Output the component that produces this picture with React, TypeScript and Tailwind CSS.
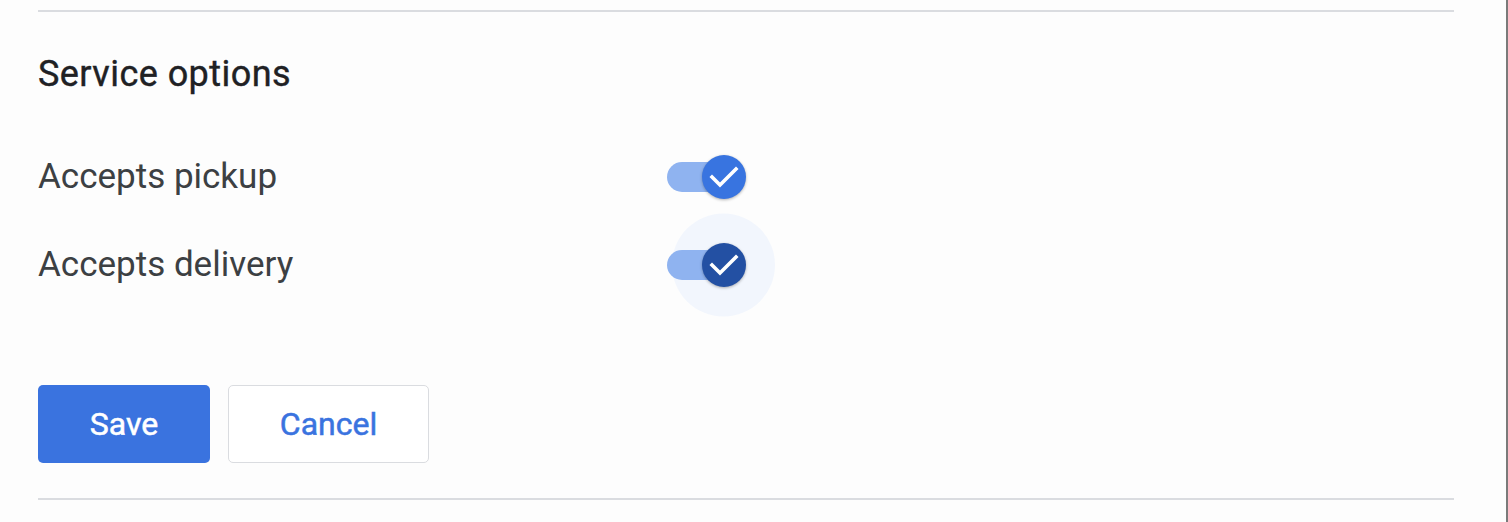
import { useState } from 'react';

function Check() {
  return (
    <svg width="30" height="22" viewBox="0 0 30 22" fill="none">
      <polyline points="3,11 11,19 27,3" stroke="white" strokeWidth="3.6" strokeLinecap="square" strokeLinejoin="miter" />
    </svg>
  );
}

function Toggle({ checked, focused, onChange }: { checked: boolean; focused?: boolean; onChange: () => void }) {
  return (
    <button onClick={onChange} className="relative w-[80px] h-[44px] flex items-center outline-none">
      <span className={`w-[73px] h-[30px] rounded-full ${checked ? 'bg-[#8fb3f0]' : 'bg-[#bdc1c6]'}`} />
      <span
        className={`absolute top-0 ${checked ? 'left-[35px]' : 'left-0'} w-[44px] h-[44px] rounded-full flex items-center justify-center shadow-[0_1px_3px_rgba(0,0,0,0.3)] ${
          focused ? 'bg-[#2350a3]' : checked ? 'bg-[#3874e0]' : 'bg-white'
        }`}
      >
        {checked && <Check />}
      </span>
    </button>
  );
}

export default function App() {
  const [pickup, setPickup] = useState(true);
  const [delivery, setDelivery] = useState(true);

  return (
    <div className="w-full h-[522px] bg-[#fdfdfd] border-r-2 border-[#7a7a7a] font-['Roboto',sans-serif]">
      <div className="pl-[38px] w-[1454px] flex flex-col">
        <div className="mt-[10px] h-[2px] bg-[#dadce0]" />

        <div className="mt-[32px] h-[60px] flex items-center">
          <h2 className="text-[36px] font-normal tracking-[0.45px] text-[#202124] [-webkit-text-stroke:0.4px_#202124]">Service options</h2>
        </div>

        <div className="mt-[29px] h-[88px] flex items-center">
          <span className="w-[629px] text-[35px] text-[#3c4043]">Accepts pickup</span>
          <Toggle checked={pickup} onChange={() => setPickup(!pickup)} />
        </div>
        <div className="h-[88px] flex items-center">
          <span className="w-[629px] text-[35px] text-[#3c4043] mt-[1px]">Accepts delivery</span>
          <div className="relative">
            <span className="absolute left-[5px] top-1/2 -translate-y-1/2 w-[103px] h-[103px] rounded-full bg-[#f2f6fd]" />
            <Toggle checked={delivery} focused onChange={() => setDelivery(!delivery)} />
          </div>
        </div>

        <div className="mt-[76px] flex gap-[18px]">
          <button className="w-[172px] h-[78px] rounded-[5px] bg-[#3a73df] text-white text-[32px] font-normal [-webkit-text-stroke:0.5px_white]">Save</button>
          <button className="w-[201px] h-[78px] rounded-[5px] border-[1.5px] border-[#dadce0] bg-white text-[#3a73df] text-[32px] font-normal [-webkit-text-stroke:0.5px_#3a73df]">Cancel</button>
        </div>

        <div className="mt-[35px] h-[2px] bg-[#dadce0]" />
      </div>
    </div>
  );
}
